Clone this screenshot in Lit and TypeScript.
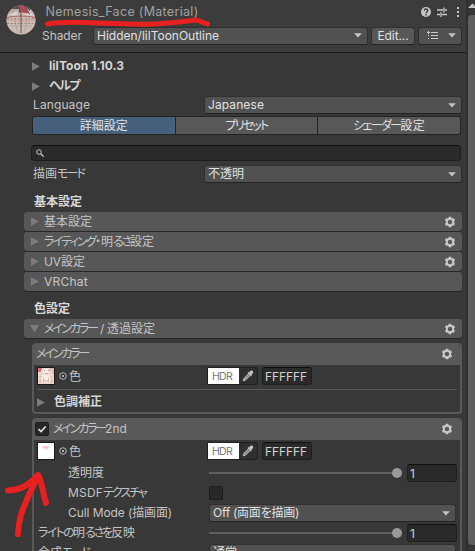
import { LitElement, html, css, svg, nothing } from "lit";
import { customElement, property } from "lit/decorators.js";

/** A run of text whose tracking is adjusted so that it fills a given width. */
@customElement("ui-text")
class UiText extends LitElement {
  @property() text = "";
  @property({ type: Number }) w = 0;
  static styles = css`
    :host { display: inline-block; white-space: pre; flex: none; }
    .run { display: inline-block; white-space: pre; }
  `;
  render() {
    return html`<span class="run">${this.text}</span>`;
  }
  firstUpdated() {
    const run = this.renderRoot.querySelector(".run") as HTMLElement;
    const natural = run.getBoundingClientRect().width;
    if (this.w && natural) {
      run.style.letterSpacing = `${(this.w - natural) / this.text.length}px`;
    }
  }
}

type Run = [string, number];
const t = (text: string, w: number) => html`<ui-text .text=${text} .w=${w}></ui-text>`;
/** Mixed scripts are tracked run by run: kana are narrow, kanji take a full em. */
const runs = (...parts: Run[]) => parts.map(([text, w]) => t(text, w));

const gear = html`<svg class="gear" viewBox="0 0 12 12">
  <path fill="#c8c8c8" fill-rule="evenodd" d="M4.8.7h2.4l.35 1.35.95.55 1.35-.4 1.2 2.1-1 1v1.4l1 1-1.2 2.1-1.35-.4-.95.55-.35 1.35H4.8l-.35-1.35-.95-.55-1.35.4-1.2-2.1 1-1V5.3l-1-1 1.2-2.1 1.35.4.95-.55zM6 3.8a2.2 2.2 0 1 0 0 4.4 2.2 2.2 0 0 0 0-4.4z"/>
</svg>`;
const caret = html`<svg class="caret" viewBox="0 0 8 5"><path fill="#c4c4c4" d="M.2.3h7.6L4 4.6z"/></svg>`;
const right = html`<svg class="tri" viewBox="0 0 8 9"><path fill="#7c7c7c" d="M0 .2v8.6L7.8 4.5z"/></svg>`;
const down = html`<svg class="tri wide" viewBox="0 0 9 8"><path fill="#7c7c7c" d="M.1 0h8.8L4.5 7.8z"/></svg>`;
const dropper = html`<svg class="dropper" viewBox="0 0 12 12">
  <path fill="#c4c4c4" d="M7.700 1.500c1-1.200 2.200-1.300 3-.6s.6 2-.5 3L9.300 4.800l.6.7-1 1-3.500-3.500 1-1 .7.500z"/>
  <path fill="#8c8c8c" stroke="#c4c4c4" stroke-width=".9" d="M6.300 4 2 8.300l-.9 2.600L3.700 10 8 5.700"/>
</svg>`;

@customElement("app-root")
class AppRoot extends LitElement {
  static styles = css`
    :host {
      display: block; position: relative; width: 475px; height: 551px; overflow: hidden;
      background: #383838; color: #c4c4c4;
      font: 12px/16px Inter, "Noto Sans CJK JP", sans-serif;
      font-feature-settings: "palt";
    }
    * { box-sizing: border-box; }
    svg { display: block; flex: none; }
    .window { display: flex; height: 551px; }
    .main { width: 466px; flex: none; }
    .bar { flex: 1; background: #353535; border-left: 2px solid #2f2f2f; display: flex; flex-direction: column; overflow: hidden; }
    .bar svg { width: 7px; height: 15px; }
    .thumb { height: 530px; width: 14px; background: #5f5f5f; border-radius: 4px; flex: none; }
    .header { height: 53px; background: #3c3c3c; border-bottom: 1px solid #1c1c1c; display: flex; padding-left: 6px; }
    .ball { width: 30px; height: 30px; margin-top: 5px; }
    .head { flex: 1; }
    .line1 { display: flex; align-items: center; height: 22px; padding: 2px 0 0 9.5px; color: #a2a2a2; font-size: 12.5px; }
    .tools { display: flex; align-items: center; margin-left: auto; margin-right: 4px; }
    .tools svg { width: 42px; height: 14px; }
    .line2 { display: flex; align-items: center; height: 17px; margin-top: 5px; padding-left: 6px; }
    .line2 > :first-child { width: 51px; }
    .drop, .btn { display: flex; align-items: center; background: #515151; border: 1px solid #303030; border-bottom-color: #242424; border-radius: 3px; height: 18px; padding: 0 5px 0 3px; color: #e0e0e0; }
    .drop .caret { margin-left: auto; }
    .caret { width: 8px; height: 5px; }
    .shader { width: 275px; }
    .btn { background: #585858; width: 44px; margin-left: 3px; justify-content: center; padding: 0; }
    .list { width: 44px; margin-left: 3px; padding-left: 8px; }
    .list .icon { width: 12px; height: 9px; }
    .fold { display: flex; align-items: center; height: 20px; padding-left: 32px; font-weight: 700; color: #d4d4d4; }
    .lead { margin-top: 3px; }
    .tri { width: 8px; height: 9px; }
    .tri.wide { width: 9px; height: 8px; }
    .fold .tri { margin-right: 9px; }
    .row { display: flex; align-items: center; height: 18px; padding-left: 33px; }
    .label { width: 171px; flex: none; display: flex; align-items: center; }
    .row .drop { width: 258px; }
    .tabs { display: flex; margin: 2px 0 0 32px; width: 429px; height: 19px; border: 1px solid #242424; border-radius: 3px; overflow: hidden; color: #e0e0e0; background: #242424; gap: 1px; }
    .tabs div { flex: 1; background: #585858; display: flex; align-items: center; justify-content: center; }
    .tabs .on { background: #46607c; }
    .search { margin: 10px 0 4px 31px; width: 430px; height: 16px; border: 1px solid #1c1c1c; border-top-color: #0f0f0f; background: #2a2a2a; border-radius: 4px; display: flex; align-items: center; padding-left: 4px; }
    .search svg { width: 8px; height: 8px; }
    .title { height: 29px; padding: 11px 0 0 34px; font-weight: 700; color: #d8d8d8; }
    .title.second { height: 27px; padding-top: 9px; }
    .section { display: flex; align-items: center; height: 19px; width: 438px; margin: 0 0 1px 24px; background: #575757; border-radius: 3px; padding: 0 6px 0 7px; box-shadow: 0 1px 0 #272727; }
    .section .tri { margin-right: 5px; }
    .section .tri.wide { margin-left: -1px; margin-right: 5px; }
    .gear { width: 12px; height: 12px; margin-left: auto; }
    .box { margin: 4px 0 0 32px; width: 430px; border: 2px solid #595959; border-top: 0; border-radius: 4px; overflow: hidden; }
    .box.first { height: 71px; margin-top: 5px; }
    .box.second { height: 160px; }
    .cap { display: flex; align-items: center; height: 22px; background: #595959; padding: 0 7px 0 2px; }
    .check { width: 14px; height: 14px; background: #282828; border: 1px solid #1c1c1c; border-radius: 2px; }
    .cap .check { margin-left: -1px; margin-right: 4px; }
    .check svg { width: 12px; height: 12px; }
    .color { display: flex; align-items: center; height: 18px; margin-top: 2px; padding-left: 3px; }
    .thumbnail { width: 18px; height: 18px; border: 1px solid #1a1a1a; }
    .dot { width: 8px; height: 8px; margin: 0 2px 0 4px; }
    .glyph { width: 138px; padding-top: 1px; }
    .hdr { display: flex; align-items: center; width: 51px; height: 18px; border: 1px solid #1f1f1f; border-radius: 0 3px 3px 0; background: #303030; }
    .hdr .white { display: flex; align-items: center; width: 31px; height: 16px; background: #fff; color: #777; font-size: 10.5px; padding: 2px 0 0 4px; flex: none; }
    .dropper { width: 12px; height: 12px; margin-left: 3px; }
    .field { display: flex; align-items: center; height: 18px; width: 50px; background: #2a2a2a; border: 1px solid #1f1f1f; border-top-color: #0f0f0f; border-radius: 3px; padding: 1px 0 0 2px; color: #d2d2d2; }
    .hex { margin-left: 4px; }
    .sep { height: 1px; background: #595959; margin: 4px 3px 2px; }
    .box .fold { padding-left: 3px; }
    .box .fold .tri { margin-right: 9px; }
    .gap { height: 3px; }
    .prop { display: flex; align-items: center; height: 20px; padding-left: 34px; }
    .prop .label { width: 141px; }
    .prop.outer { padding-left: 4px; }
    .prop.outer .label { width: 171px; }
    .prop .drop { width: 247px; height: 18px; }
    .track { width: 193px; height: 2px; background: #5e5e5e; display: flex; align-items: center; justify-content: flex-end; }
    .knob { width: 10px; height: 10px; border-radius: 50%; background: #999; flex: none; }
    .slider .field { margin-left: 5px; }
    .marks { position: absolute; left: 0; top: 0; width: 475px; height: 551px; }
  `;

  drop(...parts: Run[]) {
    return html`<div class="drop">${runs(...parts)}${caret}</div>`;
  }
  section(parts: Run[], hasGear = true, open = false) {
    return html`<div class="section">${open ? down : right}${runs(...parts)}${hasGear ? gear : nothing}</div>`;
  }
  color(face: boolean) {
    return html`<div class="color">
      <svg class="thumbnail" viewBox="0 0 16 16">
        <rect width="16" height="16" fill=${face ? "#eed9d0" : "#fff"} />
        ${face
          ? svg`<path fill="#d4707a" d="M0 0h4v2H3v2H0z"/><path fill="#e2bcb6" d="M11 0h5v6h-2V3h-3z"/>
            <path fill="#fbf0e8" d="M5 1h6v4H5zM4 7h8v5H4z"/><path fill="#a98782" d="M6 2h1v1H6zM10 2h1v1h-1z"/><path fill="#d0a8a0" d="M7 5h3v1H7z"/>
            <path fill="none" stroke="#dcc0b6" d="M1 8.500h3M12 8.500h3M5.500 9v5M10.500 9v5M6 12.500h5"/>
            <path fill="#e0c2b9" d="M1 11h2v4H1zM13 11h2v4h-2z"/>`
          : svg`<path fill="#fbe4e6" d="M4 3h8v4H4z" opacity=".5"/><path fill="#f3bcc4" d="M5 3.500h6v1H5zM6 4.500h4v1H6z"/>`}
      </svg>
      <svg class="dot" viewBox="0 0 8 8"><circle cx="4" cy="4" r="3.300" fill="none" stroke="#c4c4c4" stroke-width=".9"/><circle cx="4" cy="4" r="1" fill="#d0d0d0"/></svg>
      <div class="glyph">${t("色", 12)}</div>
      <div class="hdr"><div class="white">${t("HDR", 20)}</div>${dropper}</div>
      <div class="field hex">${t("FFFFFF", 42)}</div>
    </div>`;
  }
  slider() {
    return html`<div class="track"><div class="knob"></div></div><div class="field">${t("1", 6)}</div>`;
  }

  render() {
    return html`
      <div class="window">
        <div class="main">
          <div class="header">
            <svg class="ball" viewBox="0 0 30 30">
              <defs><clipPath id="c"><circle cx="15" cy="15" r="14.500"/></clipPath></defs>
              <g clip-path="url(#c)">
                <rect width="30" height="30" fill="#cbbdb6"/>
                <path fill="#555052" d="M5 0h19v9L16 7 5 10z"/>
                <path fill="#b8a9a4" d="M5 4h8v6H3z"/>
                <path fill="#b5475a" d="M13 1h5l5 8-8-2z"/>
                <path fill="#d6cdca" d="M20 2l8 9h-3z"/>
                <path fill="#ded2cc" d="M3 10l8-4 1 4zM17 9l5-1 1 2z"/>
                <path fill="none" stroke="#a85a5c" stroke-width="1.200" d="M1 12.500q14-3 28 0"/>
                <path fill="none" stroke="#d5aaa3" stroke-width="2" d="M0 15.500h30"/>
                <path fill="none" stroke="#a4827d" stroke-dasharray="2 1.500" d="M1 14h28M1 18.500h28"/>
                <path fill="none" stroke="#75605f" stroke-width="1.200" d="M15 4v24"/>
                <path fill="none" stroke="#a8958f" stroke-width=".7" d="M9 12q0 9 3 16M21 12q0 9-3 16M4 21h22"/>
              </g>
            </svg>
            <div class="head">
              <div class="line1">${t("Nemesis_Face (Material)", 153)}
                <div class="tools"><svg viewBox="0 0 42 14">
                  <circle cx="6" cy="7" r="5" fill="#c8c8c8"/>
                  <path fill="none" stroke="#3c3c3c" stroke-width="1.400" d="M4.300 5.700c0-2.200 3.500-2.200 3.500 0 0 1.100-1.700 1.200-1.700 2.500M6.100 9v1.500"/>
                  <path fill="none" stroke="#c8c8c8" stroke-width="1.300" d="M17 5h6M25 5h2M24 2.500v5M17 9.500h3M22 9.500h5M21 7v5"/>
                  <path fill="#c8c8c8" d="M37 2h2v2h-2zM37 6h2v2h-2zM37 10h2v2h-2z"/>
                </svg></div>
              </div>
              <div class="line2">
                <div>${t("Shader", 40)}</div>
                <div class="drop shader">${t("Hidden/lilToonOutline", 122)}${caret}</div>
                <div class="btn">${t("Edit...", 31)}</div>
                <div class="drop list">
                  <svg class="icon" viewBox="0 0 12 9"><path fill="none" stroke="#c8c8c8" d="M0 1.500h3M1.500 0v3M4 1.500h7M4 4.500h7M4 7.500h7M1.500 4v1M1.500 7v1"/></svg>${caret}
                </div>
              </div>
            </div>
          </div>

          <div class="fold lead">${right}${t("lilToon 1.10.3", 75)}</div>
          <div class="fold">${right}${t("ヘルプ", 30)}</div>
          <div class="row"><div class="label">${t("Language", 57)}</div>${this.drop(["Japanese", 56])}</div>
          <div class="tabs">
            <div class="on">${t("詳細設定", 48)}</div>
            <div>${t("プリセット", 42)}</div>
            <div>${runs(["シェーダー", 47], ["設定", 25])}</div>
          </div>
          <div class="search"><svg viewBox="0 0 8 8"><circle cx="3" cy="3" r="2.300" fill="none" stroke="#c4c4c4"/><path stroke="#c4c4c4" stroke-width="1.400" d="m4.700 4.700 3 3"/></svg></div>
          <div class="row"><div class="label">${runs(["描画", 24], ["モード", 27])}</div>${this.drop(["不透明", 36])}</div>

          <div class="title">${t("基本設定", 48)}</div>
          ${this.section([["基本設定", 48]])}
          ${this.section([["ライティング", 51], ["・", 6], ["明", 12], ["るさ", 17], ["設定", 24]])}
          ${this.section([["UV", 17], ["設定", 24]])}
          ${this.section([["VRChat", 44]], false)}
          <div class="title second">${t("色設定", 36)}</div>
          ${this.section([["メインカラー", 53], [" / ", 10], ["透過設定", 48]], true, true)}

          <div class="box first">
            <div class="cap">${t("メインカラー", 52)}${gear}</div>
            ${this.color(true)}
            <div class="sep"></div>
            <div class="fold">${right}${t("色調補正", 48)}</div>
          </div>
          <div class="box second">
            <div class="cap">
              <div class="check"><svg viewBox="0 0 12 12"><path fill="none" stroke="#e8e8e8" stroke-width="1.600" d="m2.500 6 2.500 2.500L9.700 3.500"/></svg></div>
              ${runs(["メインカラー", 52], ["2nd", 22])}${gear}
            </div>
            ${this.color(false)}
            <div class="gap"></div>
            <div class="prop slider"><div class="label">${t("透明度", 36)}</div>${this.slider()}</div>
            <div class="prop"><div class="label">${runs(["MSDF", 35], ["テクスチャ", 43])}</div><div class="check"></div></div>
            <div class="prop"><div class="label">${runs(["Cull Mode ", 60], ["(描画面)", 44])}</div>${this.drop(["Off (両面を描画)", 86])}</div>
            <div class="prop slider outer"><div class="label">${runs(["ライトの", 35], ["明", 12], ["るさを", 26], ["反映", 24])}</div>${this.slider()}</div>
            <div class="prop outer"><div class="label">${runs(["合成", 24], ["モード", 27])}</div>${this.drop(["通常", 24])}</div>
          </div>
        </div>
        <div class="bar">
          <svg viewBox="0 0 7 15"><path fill="#c4c4c4" d="M0 8 4.500 3.500 9 8z"/></svg>
          <div class="thumb"></div>
        </div>
      </div>
      <svg class="marks" viewBox="0 0 475 551" fill="none" stroke="#e8201f" stroke-linecap="round" stroke-linejoin="round">
        <path stroke-width="5" d="M47.500 24c15-3 35-1.500 52-1s38 2 55 1 27-2 42-4l11 4"/>
        <path stroke-width="6" d="M18 534c1-18 5-25 10-37 4-9 7-14 10-22M8 490.500c13-.5 20-5 30-15.500 5 9 4 15 8 28"/>
      </svg>
    `;
  }
}
